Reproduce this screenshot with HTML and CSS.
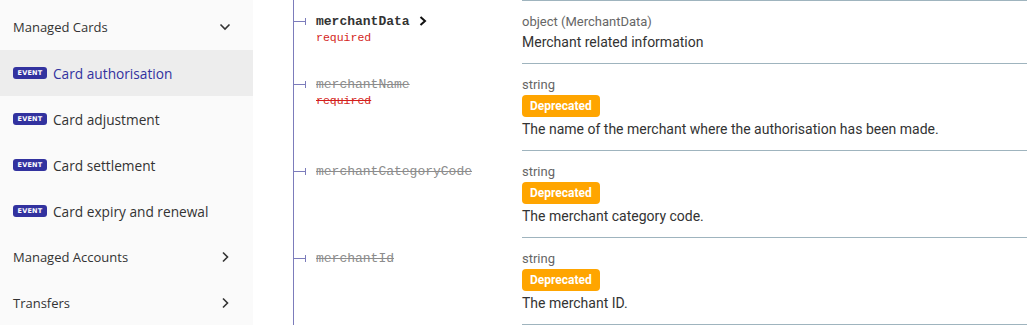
FILE: index.html
```html
<!DOCTYPE html>
<html lang="en">
<head>
    <meta charset="UTF-8">
    <meta name="viewport" content="width=device-width, initial-scale=1.0">
    <title>Card authorisation</title>
    <link rel="stylesheet" href="styles.css">
</head>
<body>
    <div class="layout">
        <nav class="menu">
            <div class="menu-item group">
                <span class="label">Managed Cards</span>
                <svg class="chev" width="12" height="8" viewBox="0 0 12 8"><path d="M1.5 1.5 L6 6 L10.5 1.5" fill="none" stroke="#333" stroke-width="1.6"/></svg>
            </div>
            <div class="menu-item active">
                <span class="event">EVENT</span>
                <span class="label">Card authorisation</span>
            </div>
            <div class="menu-item">
                <span class="event">EVENT</span>
                <span class="label">Card adjustment</span>
            </div>
            <div class="menu-item">
                <span class="event">EVENT</span>
                <span class="label">Card settlement</span>
            </div>
            <div class="menu-item">
                <span class="event">EVENT</span>
                <span class="label">Card expiry and renewal</span>
            </div>
            <div class="menu-item group">
                <span class="label">Managed Accounts</span>
                <svg class="chev" width="12" height="12" viewBox="0 0 12 12"><path d="M4 1.5 L8.5 6 L4 10.5" fill="none" stroke="#333" stroke-width="1.6"/></svg>
            </div>
            <div class="menu-item group">
                <span class="label">Transfers</span>
                <svg class="chev" width="12" height="12" viewBox="0 0 12 12"><path d="M4 1.5 L8.5 6 L4 10.5" fill="none" stroke="#333" stroke-width="1.6"/></svg>
            </div>
        </nav>

        <main class="content">
            <div class="props">
                <div class="prop-name">
                    <svg class="tick" width="12" height="9" viewBox="0 0 12 9"><path d="M0 4.5 H11 M11.5 1 V8" stroke="#7c7cbb" stroke-width="1"/></svg>
                    <div>
                        <div class="name">merchantData
                            <svg class="expand" width="8" height="10" viewBox="0 0 8 10"><path d="M1.5 1 L6 5 L1.5 9" fill="none" stroke="#111" stroke-width="2"/></svg>
                        </div>
                        <div class="required">required</div>
                    </div>
                </div>
                <div class="prop-detail">
                    <div class="type">object (MerchantData)</div>
                    <div class="desc">Merchant related information</div>
                </div>

                <div class="prop-name">
                    <svg class="tick" width="12" height="9" viewBox="0 0 12 9"><path d="M0 4.5 H11 M11.5 1 V8" stroke="#7c7cbb" stroke-width="1"/></svg>
                    <div>
                        <div class="name deprecated">merchantName</div>
                        <div class="required deprecated">required</div>
                    </div>
                </div>
                <div class="prop-detail">
                    <div class="type">string</div>
                    <span class="badge">Deprecated</span>
                    <div class="desc">The name of the merchant where the authorisation has been made.</div>
                </div>

                <div class="prop-name">
                    <svg class="tick" width="12" height="9" viewBox="0 0 12 9"><path d="M0 4.5 H11 M11.5 1 V8" stroke="#7c7cbb" stroke-width="1"/></svg>
                    <div>
                        <div class="name deprecated">merchantCategoryCode</div>
                    </div>
                </div>
                <div class="prop-detail">
                    <div class="type">string</div>
                    <span class="badge">Deprecated</span>
                    <div class="desc">The merchant category code.</div>
                </div>

                <div class="prop-name">
                    <svg class="tick" width="12" height="9" viewBox="0 0 12 9"><path d="M0 4.5 H11 M11.5 1 V8" stroke="#7c7cbb" stroke-width="1"/></svg>
                    <div>
                        <div class="name deprecated">merchantId</div>
                    </div>
                </div>
                <div class="prop-detail last">
                    <div class="type">string</div>
                    <span class="badge">Deprecated</span>
                    <div class="desc">The merchant ID.</div>
                </div>
            </div>
        </main>
    </div>
</body>
</html>
```

FILE: styles.css
```css
body {
    margin: 0;
    font-family: Roboto, "Liberation Sans", sans-serif;
    color: #333;
    background-color: #fff;
    overflow: hidden;
}

.layout {
    display: flex;
    height: 325px;
}

/* sidebar */
.menu {
    width: 253px;
    flex-shrink: 0;
    background-color: #fafafa;
    padding-top: 4px;
    font-family: "Open Sans", sans-serif;
    font-size: 13.7px;
}

.menu-item {
    display: flex;
    align-items: center;
    height: 46px;
    padding: 0 22px 0 13px;
    color: #333;
}

.menu-item.group .label {
    flex: 1;
    font-size: 13px;
}

.menu-item.active {
    background-color: #ededed;
}

.menu-item.active .label {
    color: #32329f;
}

.event {
    display: inline-block;
    width: 34px;
    height: 12px;
    line-height: 12px;
    margin-right: 6px;
    border-radius: 3px;
    background-color: #32329f;
    color: #fff;
    font-family: "DejaVu Sans", sans-serif;
    font-size: 6.5px;
    font-weight: bold;
    text-align: center;
    letter-spacing: 0.2px;
}

/* properties */
.content {
    flex: 1;
    padding-left: 40px;
}

.props {
    display: grid;
    grid-template-columns: 229px 1fr;
}

.prop-name {
    display: flex;
    align-items: flex-start;
    border-left: 1px solid #7c7cbb;
    padding-top: 12px;
}

.tick {
    margin-top: 5px;
    margin-right: 10px;
    flex-shrink: 0;
}

.name {
    font-family: "Liberation Mono", monospace;
    font-size: 13px;
    font-weight: bold;
    line-height: 19px;
    color: #333;
}

.expand {
    margin-left: 2px;
    vertical-align: -1px;
}

.required {
    font-family: "Liberation Mono", monospace;
    font-size: 11.5px;
    line-height: 13px;
    color: #d41f1c;
}

.deprecated {
    text-decoration: line-through;
}

.name.deprecated {
    font-weight: normal;
    color: #8c8c8c;
}

.prop-detail {
    border-top: 1px solid #9fb4be;
    padding: 11px 10px 11px 0;
}

.prop-detail.last {
    border-bottom: 1px solid #9fb4be;
}

.type {
    font-size: 13px;
    line-height: 19px;
    color: #666;
}

.badge {
    display: inline-block;
    height: 22px;
    line-height: 22px;
    margin-top: 1px;
    padding: 0 8px;
    border-radius: 4px;
    background-color: #ffa500;
    color: #fff;
    font-size: 12px;
    font-weight: bold;
}

.desc {
    margin-top: 1px;
    font-size: 14px;
    line-height: 20px;
    color: #333;
}

.badge + .desc {
    margin-top: 2px;
}
```
